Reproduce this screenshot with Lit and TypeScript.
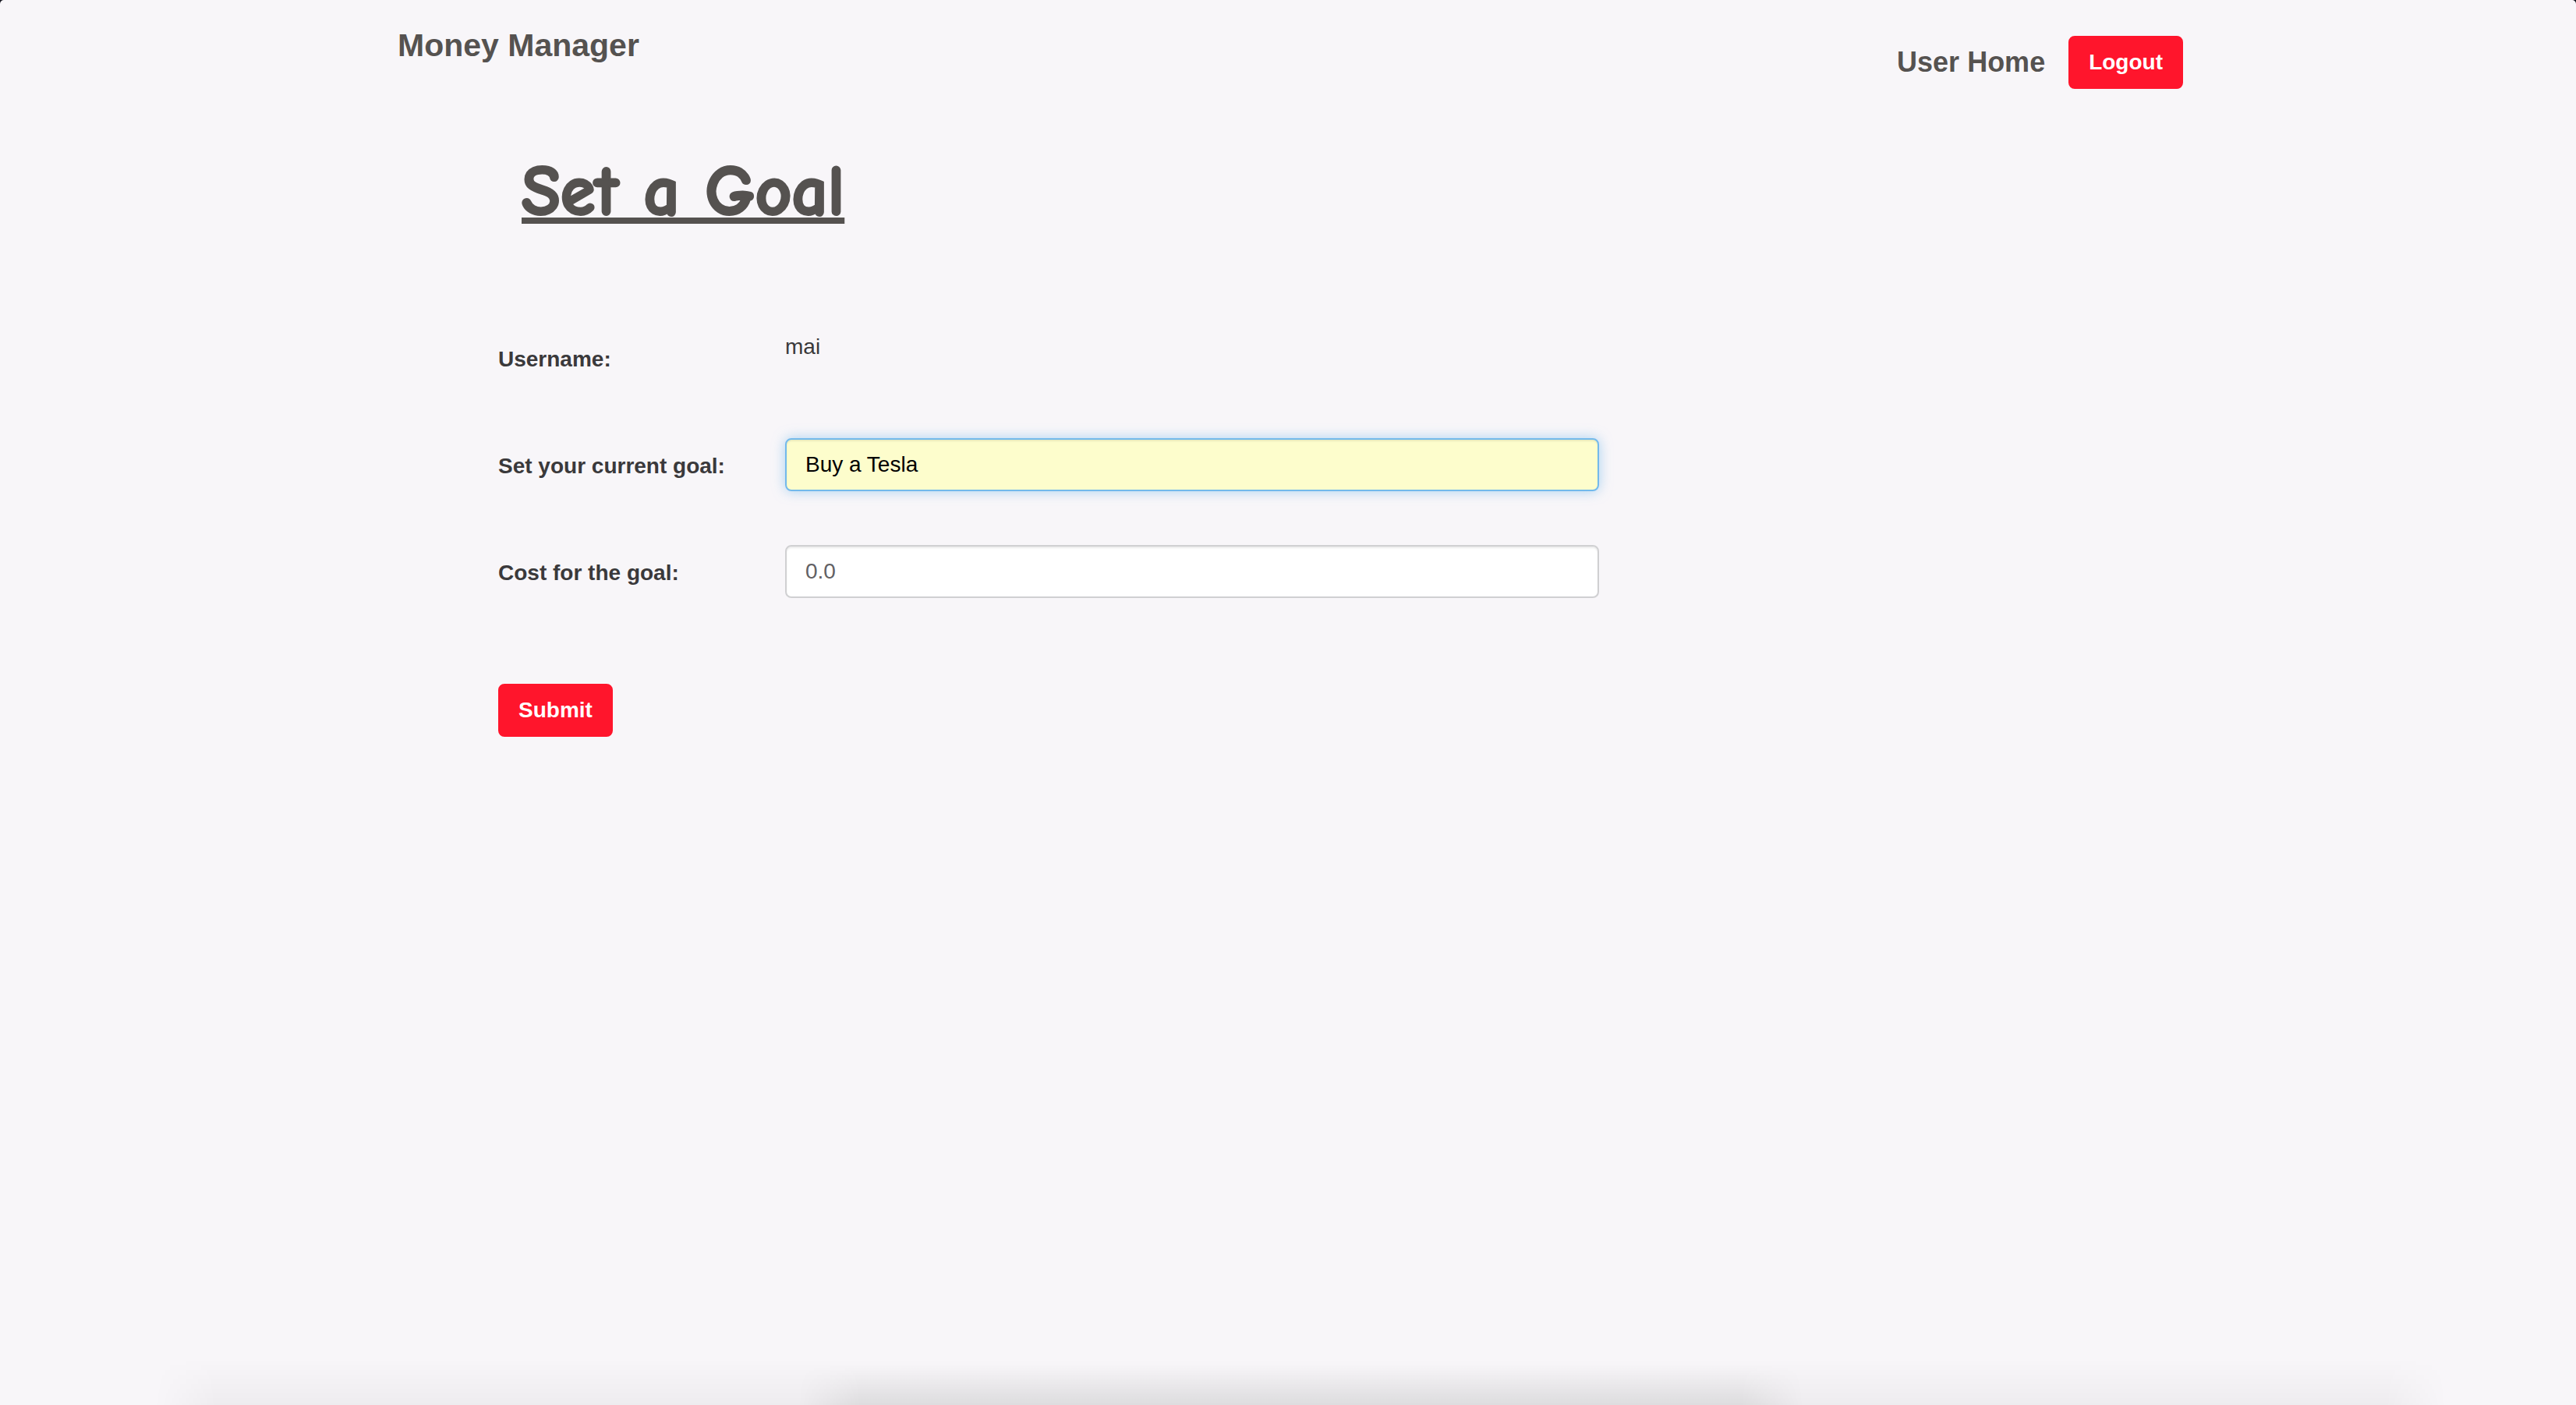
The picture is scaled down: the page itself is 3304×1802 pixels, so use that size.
import { LitElement, html, css } from "lit";
import { customElement, state } from "lit/decorators.js";

@customElement("app-root")
export class AppRoot extends LitElement {
  @state() private goal = "Buy a Tesla";
  @state() private cost = "0.0";

  static styles = css`
    :host {
      display: block;
      background: #15151f;
      font-family: "Helvetica Neue", "Liberation Sans", Arial, sans-serif;
      font-size: 28px;
      line-height: 40px;
      color: #3a393b;
    }
    *,
    *::before,
    *::after {
      box-sizing: border-box;
    }
    .page {
      position: relative;
      min-height: 100vh;
      background: #f8f6f9;
      border-radius: 5px 5px 0 0;
      overflow: hidden;
    }
    .container {
      width: 100%;
      max-width: 2340px;
      margin: 0 auto;
      padding: 0 22px 0 28px;
    }
    .navbar {
      display: flex;
      justify-content: space-between;
      align-items: flex-start;
      padding-top: 38px;
    }
    .brand,
    .nav-link {
      color: #555250;
      font-weight: 700;
      text-decoration: none;
    }
    .brand {
      font-size: 41px;
    }
    .nav {
      display: flex;
      align-items: center;
      gap: 30px;
      padding-top: 8px;
    }
    .nav-link {
      font-size: 36px;
    }
    .btn {
      height: 68px;
      padding: 0 24px;
      border: 2px solid #ff152c;
      border-radius: 8px;
      background: #ff152c;
      color: #fff;
      font: inherit;
      font-weight: 700;
      cursor: pointer;
    }
    .content {
      padding: 74px 129px 0;
    }
    .title {
      margin: 0 0 0 30px;
      font-family: "Comic Sans MS", "Comic Neue", "Noto Sans", sans-serif;
      font-size: 91px;
      line-height: 116px;
      font-weight: 700;
      color: #555250;
      text-decoration: underline;
      text-decoration-thickness: 8px;
      text-decoration-skip-ink: none;
      text-underline-offset: 4px;
      -webkit-text-stroke: 3px #555250;
    }
    .form {
      margin-top: 121px;
    }
    .fields {
      display: grid;
      grid-template-columns: 368px minmax(0, 1044px);
      row-gap: 69px;
    }
    .label {
      min-height: 68px;
      padding-top: 16px;
      font-weight: 700;
    }
    .input {
      width: 100%;
      height: 68px;
      padding: 0 24px;
      border: 2px solid #d0d0d2;
      border-radius: 8px;
      background: #fff;
      box-shadow: inset 0 2px 2px rgba(0, 0, 0, 0.075);
      color: #626164;
      font: inherit;
      outline: none;
    }
    .input.active {
      border-color: #73b9eb;
      background: #fdfdcc;
      box-shadow:
        inset 0 2px 2px rgba(0, 0, 0, 0.075),
        0 0 16px rgba(115, 185, 235, 0.6);
      color: #000;
    }
    .submit {
      display: block;
      margin-top: 110px;
    }
    .shade {
      position: absolute;
      bottom: 0;
      pointer-events: none;
      mask-image: linear-gradient(
        to right,
        transparent,
        #000 80px,
        #000 calc(100% - 80px),
        transparent
      );
    }
    .shade.wide {
      left: 6%;
      right: 5%;
      height: 60px;
      background: linear-gradient(transparent, rgba(0, 0, 0, 0.04));
    }
    .shade.narrow {
      left: 31%;
      right: 30%;
      height: 52px;
      background: linear-gradient(transparent, rgba(0, 12, 0, 0.065));
    }
  `;

  render() {
    return html`
      <div class="page">
        <div class="container">
          <header class="navbar">
            <a class="brand" href="#">Money Manager</a>
            <nav class="nav">
              <a class="nav-link" href="#home">User Home</a>
              <button class="btn" type="button">Logout</button>
            </nav>
          </header>
          <main class="content">
            <h1 class="title">Set a Goal</h1>
            <form class="form" @submit=${(e: Event) => e.preventDefault()}>
              <div class="fields">
                <label class="label" for="username">Username:</label>
                <output id="username">mai</output>
                <label class="label" for="goal">Set your current goal:</label>
                <input
                  class="input active"
                  id="goal"
                  type="text"
                  .value=${this.goal}
                  @input=${(e: Event) => (this.goal = (e.target as HTMLInputElement).value)}
                />
                <label class="label" for="cost">Cost for the goal:</label>
                <input
                  class="input"
                  id="cost"
                  type="text"
                  .value=${this.cost}
                  @input=${(e: Event) => (this.cost = (e.target as HTMLInputElement).value)}
                />
              </div>
              <button class="btn submit" type="submit">Submit</button>
            </form>
          </main>
        </div>
        <div class="shade wide"></div>
        <div class="shade narrow"></div>
      </div>
    `;
  }
}
